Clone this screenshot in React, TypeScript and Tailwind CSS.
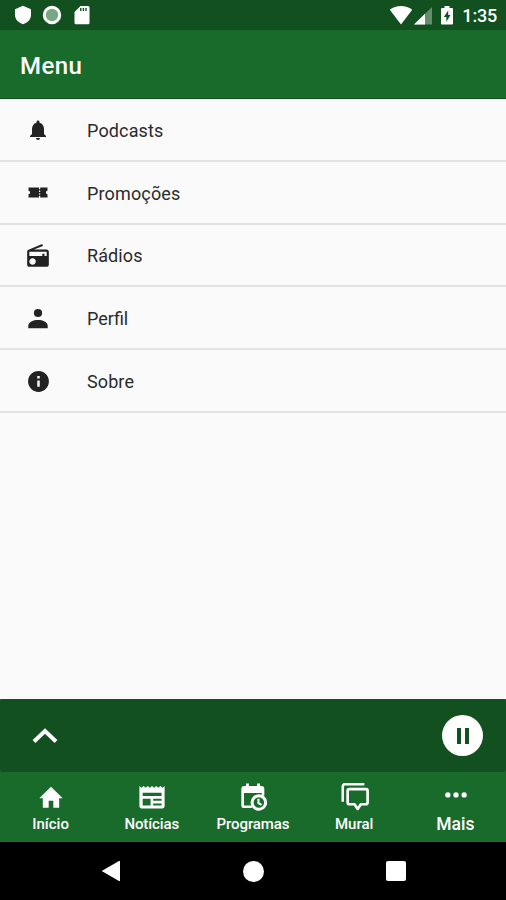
import type { ReactNode } from "react";

interface MenuItem {
  label: string;
  icon: ReactNode;
  spacing: string;
}

interface TabItem {
  label: string;
  icon: ReactNode;
  text: string;
}

function Icon({ className = "size-6", children }: { className?: string; children: ReactNode }) {
  return (
    <svg viewBox="0 0 24 24" fill="currentColor" className={`shrink-0 ${className}`} aria-hidden="true">
      {children}
    </svg>
  );
}

const MENU: MenuItem[] = [
  {
    label: "Podcasts",
    spacing: "tracking-[0.15px]",
    icon: (
      <Icon>
        <path d="M12 22c1.1 0 2-.9 2-2h-4c0 1.1.9 2 2 2zm6-6v-5c0-3.07-1.64-5.64-4.5-6.32V4c0-.83-.67-1.5-1.5-1.5s-1.5.67-1.5 1.5v.68C7.63 5.36 6 7.92 6 11v5l-2 2v1h16v-1z" />
      </Icon>
    ),
  },
  {
    label: "Promoções",
    spacing: "tracking-[0.15px]",
    icon: (
      <Icon>
        <path d="M2.5 6.500H13v1.7h1.2V6.500h7.3v3.3c-.9.1-1.6.8-1.6 1.7s.7 1.6 1.6 1.7V16.500h-7.3v-1.7H13v1.7H2.5v-3.3c.9-.1 1.6-.8 1.6-1.7s-.7-1.6-1.6-1.7zM13 9.500v1.4h1.2V9.500zm0 2.7v1.3h1.2v-1.3z" />
      </Icon>
    ),
  },
  {
    label: "Rádios",
    spacing: "tracking-[0.1px]",
    icon: (
      <Icon className="size-[26px]">
        <path d="M3.24 6.15C2.51 6.43 2 7.17 2 8v12c0 1.1.89 2 2 2h16c1.11 0 2-.9 2-2V8c0-1.11-.89-2-2-2H8.3l8.26-3.34L15.88 1 3.24 6.15zM7 20c-1.66 0-3-1.34-3-3s1.34-3 3-3 3 1.34 3 3-1.34 3-3 3zm13-8h-2v-2h-2v2H4V8h16v4z" />
      </Icon>
    ),
  },
  {
    label: "Perfil",
    spacing: "tracking-normal",
    icon: (
      <Icon>
        <circle cx="12" cy="6" r="4.1" />
        <path d="M2.3 21.300v-2.6c0-4 5.2-5.8 9.7-5.8s9.7 1.8 9.7 5.8v2.6z" />
      </Icon>
    ),
  },
  {
    label: "Sobre",
    spacing: "tracking-[0.1px]",
    icon: (
      <Icon className="size-[25px]">
        <path d="M12 2C6.48 2 2 6.48 2 12s4.48 10 10 10 10-4.48 10-10S17.52 2 12 2zm1.2 15h-2.4v-6h2.4v6zm0-7.8h-2.4V6.8h2.4v2.4z" />
      </Icon>
    ),
  },
];

const TABS: TabItem[] = [
  {
    label: "Início",
    text: "text-[15px] tracking-[0px] font-medium",
    icon: (
      <Icon className="size-7">
        <path d="M10 21.200v-6h4v6h5v-8.200h3L12 3.200 2 13h3v8.200z" />
      </Icon>
    ),
  },
  {
    label: "Notícias",
    text: "text-[15px] tracking-[-0.1px] font-medium",
    icon: (
      // newspaper with a torn top edge
      <Icon className="size-7">
        <path
          fillRule="evenodd"
          d="M22.800 2.500l-1.800 1.500-1.800-1.500-1.800 1.500-1.800-1.500L13.800 4 12 2.500 10.200 4 8.400 2.500 6.600 4 4.800 2.500 3 4 1.200 2.500v17.300c0 1.100.9 2 2 2h17.600c1.100 0 2-.9 2-2zM10.800 19.300H4v-5.800h6.800zm9.400 0H13v-1.800h7.200zm0-4h-7.200v-1.800h7.200zm0-4.200H4V8.300h16.200z"
        />
      </Icon>
    ),
  },
  {
    label: "Programas",
    text: "text-[15px] tracking-[-0.1px] font-medium",
    icon: (
      <Icon className="size-7">
        <path d="M6 .5v2H4.500A2.500 2.500 0 0 0 2 5v14a2.500 2.500 0 0 0 2.500 2.500H11v-2.300H4.300V8.500h15.200V11h2.200V5a2.500 2.500 0 0 0-2.500-2.500H18v-2h-2.500v2H8.500v-2z" />
        <circle cx="17" cy="16.700" r="5.800" fill="none" stroke="currentColor" strokeWidth="2.600" />
        <path d="M16.700 13.500v3.700l2.600 1.500" fill="none" stroke="currentColor" strokeWidth="1.800" />
      </Icon>
    ),
  },
  {
    label: "Mural",
    text: "text-[15px] tracking-[0px] font-medium",
    icon: (
      <Icon className="ml-px size-7">
        <path d="M1.500 16V3a2 2 0 0 1 2-2h16.500" fill="none" stroke="currentColor" strokeWidth="2.200" />
        <path
          d="M7.200 5.200h14.100a1.500 1.500 0 0 1 1.500 1.500v10a1.500 1.500 0 0 1-1.500 1.500H17l-2.700 4-2.700-4H7.200a1.500 1.500 0 0 1-1.500-1.500v-10a1.500 1.500 0 0 1 1.500-1.500z"
          fill="none"
          stroke="currentColor"
          strokeWidth="2.300"
          strokeLinejoin="round"
        />
      </Icon>
    ),
  },
  {
    label: "Mais",
    text: "text-[17.5px] font-medium",
    icon: (
      <Icon className="ml-px size-7">
        <circle cx="5" cy="10.200" r="2.250" />
        <circle cx="12" cy="10.200" r="2.250" />
        <circle cx="19" cy="10.200" r="2.250" />
      </Icon>
    ),
  },
];

function StatusBar() {
  return (
    <div className="flex h-[30px] items-center justify-between bg-[#12501f] pr-[9px] pl-[14px] text-white">
      <div className="flex items-center">
        <svg viewBox="0 0 18 20" className="h-5 w-[18px]" fill="currentColor" aria-hidden="true">
          <path d="M9 .8l8 3.500v5.500c0 4.500-3.400 8.200-8 9.400-4.600-1.200-8-4.900-8-9.400V4.300z" />
        </svg>
        <svg viewBox="0 0 20 20" className="ml-2.5 size-5" aria-hidden="true">
          <circle cx="10" cy="10" r="7.700" fill="#78a783" stroke="#fff" strokeWidth="3" />
        </svg>
        <svg viewBox="0 0 16 20" className="ml-3 h-5 w-4" aria-hidden="true">
          <path d="M6.500 1H14a1.500 1.500 0 0 1 1.500 1.500v15.200a1.500 1.500 0 0 1-1.500 1.500H2a1.500 1.500 0 0 1-1.500-1.500V7z" fill="#fff" />
          <path d="M6.800 3v3M9.400 3v3M12 3v3" stroke="#12501f" strokeWidth="1.400" />
        </svg>
      </div>
      <div className="flex items-center">
        <svg viewBox="0 0 24 20" className="h-5 w-6" fill="currentColor" aria-hidden="true">
          <path d="M12 19.500L.8 4.800C4 2.200 8 1 12 1s8 1.200 11.200 3.800z" />
        </svg>
        <svg viewBox="0 0 18 20" className="ml-px h-5 w-[18px]" fill="currentColor" aria-hidden="true">
          <path d="M18 2v17.500H0z" opacity=".35" />
          <path d="M11 8.800v10.700H0z" />
        </svg>
        <svg viewBox="0 0 12 20" className="ml-[9px] h-5 w-3" aria-hidden="true">
          <path d="M3.500 1h5v2H11a1 1 0 0 1 1 1v14.500a1 1 0 0 1-1 1H1a1 1 0 0 1-1-1V4a1 1 0 0 1 1-1h2.500z" fill="#fff" />
          <path d="M7.200 5.500L2.800 12h2.500v4.800L9.500 10H7.200z" fill="#12501f" />
        </svg>
        <span className="ml-[9px] pt-px text-[18px] leading-5 font-medium tracking-[-0.2px]">1:35</span>
      </div>
    </div>
  );
}

function SystemNav() {
  return (
    <div className="flex h-[58px] items-center justify-center gap-[122px] bg-black text-white">
      <svg viewBox="0 0 20 22" className="h-[22px] w-5" fill="currentColor" aria-hidden="true">
        <path d="M19 1.500v19a.7.7 0 0 1-1 .5L1.500 11.500a.6.6 0 0 1 0-1L18 1a.7.7 0 0 1 1 .5z" />
      </svg>
      <span className="size-[21px] rounded-full bg-white" />
      <span className="size-5 rounded-[2px] bg-white" />
    </div>
  );
}

export default function App() {
  return (
    <div className="flex h-[900px] w-[506px] flex-col overflow-hidden bg-[#fafafa] font-[Roboto,sans-serif]">
      <StatusBar />
      <header className="flex h-[69px] items-center border-b border-[#0c4d1d] bg-[#196b2c] pt-[3px] pl-5">
        <h1 className="text-[24px] leading-7 font-medium tracking-[0.4px] text-white">Menu</h1>
      </header>

      <ul className="flex flex-1 flex-col">
        {MENU.map((item) => (
          <li
            key={item.label}
            className="flex h-[62.75px] items-center border-b-2 border-[#e2e2e2] pt-[2px] pl-[25px]"
          >
            <span className="flex w-[26px] justify-center text-[#222222]">{item.icon}</span>
            <span className={`ml-9 pt-px text-[18px] leading-7 text-[#2b2b2b] ${item.spacing}`}>
              {item.label}
            </span>
          </li>
        ))}
      </ul>

      {/* collapsed player */}
      <div className="bg-[#196b2c]">
        <div className="flex h-[73px] items-center justify-between rounded-[3px] bg-[#12501f] pr-[23px] pl-8">
          <svg viewBox="0 0 26 18" className="h-[18px] w-[26px]" aria-hidden="true">
            <path d="M2 14.500L13 4l11 10.500" fill="none" stroke="#fff" strokeWidth="4" />
          </svg>
          <button className="flex size-[41px] items-center justify-center gap-1 rounded-full bg-white" aria-label="Pausar">
            <span className="h-4 w-1 bg-[#12501f]" />
            <span className="h-4 w-1 bg-[#12501f]" />
          </button>
        </div>
      </div>

      <nav className="grid h-[70px] grid-cols-5 bg-[#196b2c] text-white">
        {TABS.map((tab) => (
          <div key={tab.label} className="flex flex-col items-center pt-[11px]">
            {tab.icon}
            <span className={`mt-[3px] leading-5 ${tab.text}`}>{tab.label}</span>
          </div>
        ))}
      </nav>
      <SystemNav />
    </div>
  );
}
